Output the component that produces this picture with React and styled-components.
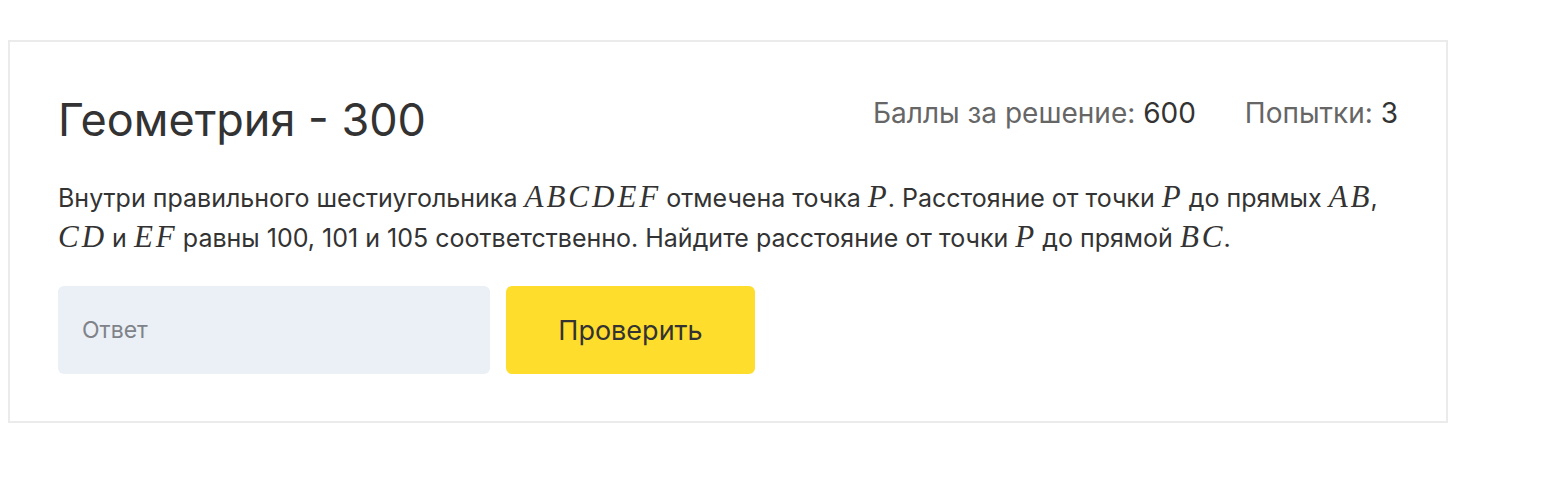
import React from 'react';
import styled, { createGlobalStyle } from 'styled-components';

const GlobalStyle = createGlobalStyle`
  body {
    margin: 0;
    padding: 40px 8px;
    background: #fff;
    font-family: Inter, Roboto, "Noto Sans", sans-serif;
  }
`;

const Card = styled.section`
  width: 1440px;
  box-sizing: border-box;
  border: 2px solid #ebebeb;
  padding: 46px 48px 47px;
  color: #333;
`;

const Header = styled.div`
  display: flex;
  justify-content: space-between;
  align-items: flex-start;
`;

const Title = styled.h2`
  margin: 0;
  font-size: 45px;
  font-weight: 400;
  line-height: 64px;
  color: #333;
`;

const Stats = styled.div`
  display: flex;
  gap: 49px;
  margin-top: 8px;
  font-size: 28px;
  line-height: 34px;
  color: #666;
`;

const Stat = styled.span`
  b {
    font-weight: 400;
    color: #333;
  }
`;

const Text = styled.p`
  margin: 26px 0 0;
  font-size: 25px;
  line-height: 40px;
  color: #333;
`;

// formula letters, set like KaTeX math italic
const M = styled.span`
  font-family: "Liberation Serif", "DejaVu Serif", serif;
  font-style: italic;
  font-size: 31px;
  line-height: 1;
  letter-spacing: 3px;
  margin-right: -2px;
`;

const Form = styled.form`
  display: flex;
  gap: 16px;
  margin-top: 28px;
`;

const Input = styled.input`
  width: 432px;
  height: 88px;
  box-sizing: border-box;
  border: none;
  border-radius: 6px;
  background: #ebeff6;
  padding: 0 24px;
  font-family: inherit;
  font-size: 23px;
  color: #333;
  outline: none;
  &::placeholder {
    color: #7f8389;
  }
`;

const Button = styled.button`
  width: 249px;
  height: 88px;
  border: none;
  border-radius: 6px;
  background: #ffdd2d;
  font-family: inherit;
  font-size: 27px;
  color: #333;
  cursor: pointer;
`;

export default function App() {
  return (
    <>
      <GlobalStyle />
      <Card>
        <Header>
          <Title>Геометрия - 300</Title>
          <Stats>
            <Stat>
              Баллы за решение: <b>600</b>
            </Stat>
            <Stat>
              Попытки: <b>3</b>
            </Stat>
          </Stats>
        </Header>
        <Text>
          Внутри правильного шестиугольника <M>ABCDEF</M> отмечена точка <M>P</M>.
          Расстояние от точки <M>P</M> до прямых <M>AB</M>,
          <br />
          <M>CD</M> и <M>EF</M> равны 100, 101 и 105 соответственно. Найдите
          расстояние от точки <M>P</M> до прямой <M>BC</M>.
        </Text>
        <Form onSubmit={(e) => e.preventDefault()}>
          <Input placeholder="Ответ" />
          <Button type="submit">Проверить</Button>
        </Form>
      </Card>
    </>
  );
}
